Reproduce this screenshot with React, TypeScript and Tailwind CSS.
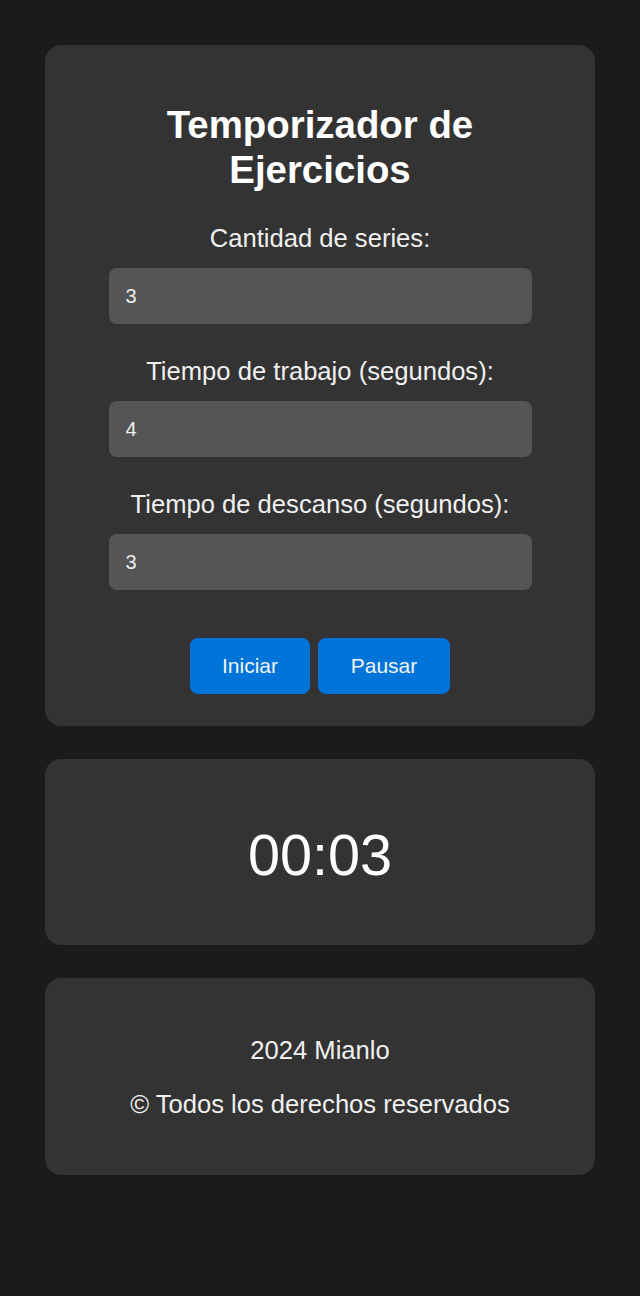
import { useState } from 'react'

const font = { fontFamily: '"Liberation Sans", Arial, sans-serif' }

function Field({ label, value }: { label: string; value: string }) {
  const [v, setV] = useState(value)
  return (
    <div className="flex w-full flex-col items-center">
      <label className="text-[25.6px] leading-[29px] text-[#f0f0f0]">{label}</label>
      <input
        type="number"
        value={v}
        onChange={(e) => setV(e.target.value)}
        className="mt-[15px] h-[56px] w-[423px] rounded-[8px] bg-[#555555] pl-[17px] text-[20px] text-[#eeeeee] outline-none"
      />
    </div>
  )
}

export default function App() {
  return (
    <div className="min-h-[1296px] bg-[#1b1b1b] px-[45px] pt-[45px] pb-[60px]" style={font}>
      <div className="flex flex-col gap-[33px]">
        {/* settings card */}
        <div className="flex flex-col items-center rounded-[16px] bg-[#333333] px-[63px] pt-[57px] pb-[32px]">
          <h2 className="w-[423px] text-center text-[38.4px] font-bold leading-[45px] text-white">
            Temporizador de Ejercicios
          </h2>
          <div className="mt-[32px] flex w-full flex-col items-center gap-[33px]">
            <Field label="Cantidad de series:" value="3" />
            <Field label="Tiempo de trabajo (segundos):" value="4" />
            <Field label="Tiempo de descanso (segundos):" value="3" />
          </div>
          <div className="mt-[48px] flex gap-[8px]">
            <button className="h-[56px] w-[120px] rounded-[8px] bg-[#0074d9] text-[21px] text-[#f4f4f4]">Iniciar</button>
            <button className="h-[56px] w-[132px] rounded-[8px] bg-[#0074d9] text-[21px] text-[#f4f4f4]">Pausar</button>
          </div>
        </div>

        {/* timer */}
        <div className="flex h-[186px] items-center justify-center rounded-[16px] bg-[#333333] pt-[8px]">
          <span className="text-[57.6px] leading-none text-white">00:03</span>
        </div>

        {/* footer */}
        <div className="flex h-[197px] flex-col items-center justify-center gap-[25px] rounded-[16px] bg-[#333333] pt-[2px] text-[25.6px] leading-[29px] text-[#f0f0f0]">
          <p>2024 Mianlo</p>
          <p>© Todos los derechos reservados</p>
        </div>
      </div>
    </div>
  )
}
